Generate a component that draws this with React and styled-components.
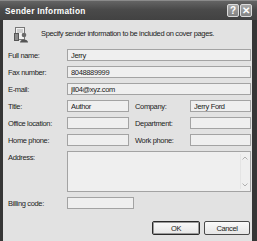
import React from 'react'
import styled, { createGlobalStyle } from 'styled-components'

const Global = createGlobalStyle`
body {
  margin: 0;
  background: #3a3a3a;
}
* { box-sizing: border-box; }
`
const Window = styled.div`
width: 257px;
height: 241px;
background: #363636;
display: flex;
flex-direction: column;
overflow: hidden;
font-family: "Liberation Sans", Arial, sans-serif;
font-size: 7.5px;
letter-spacing: -0.35px;
color: #222;
`
const TitleBar = styled.div`
height: 20px;
flex: none;
display: flex;
align-items: center;
padding: 0 5px 0 5px;
background: linear-gradient(#646464, #4a4a4a 45%, #424242);
border-top: 1px solid #8a8a8a;
`
const Caption = styled.div`
flex: 1;
color: #fff;
font-weight: bold;
font-size: 8.3px;
letter-spacing: 0.25px;
`
const CapButton = styled.div`
width: 12px;
height: 13px;
margin-left: 1px;
border: 1px solid #dcdcdc;
border-radius: 2px;
background: linear-gradient(#a8a8a8, #828282);
color: #fff;
font-weight: bold;
font-size: 10px;
letter-spacing: 0;
line-height: 11px;
text-align: center;
`
const Body = styled.div`
flex: 1;
margin: 0 5px 0 3px;
background: #e2e2e2;
display: flex;
flex-direction: column;
`
const Header = styled.div`
display: flex;
align-items: flex-start;
padding: 7px 0 0 11px;
height: 23px;
`
const Intro = styled.div`
margin-left: 12px;
margin-top: 2px;
`
const Form = styled.div`
margin-top: 6px;
padding-left: 5px;
display: grid;
grid-template-columns: 59px 62px 61px 61px;
row-gap: 5px;
`
const Label = styled.div`
display: flex;
align-items: ${p => (p.top ? 'flex-start' : 'center')};
padding-top: ${p => (p.top ? '2px' : '0')};
padding-left: ${p => (p.second ? '6px' : '0')};
white-space: nowrap;
`
const Field = styled.input`
height: 12px;
width: ${p => (p.w ? `${p.w}px` : 'auto')};
grid-column: ${p => (p.wide ? '2 / 5' : 'auto')};
min-width: 0;
margin: 0;
padding: 0 3px;
border: 1px solid #a3a3a3;
background: #efefef;
font: inherit;
letter-spacing: inherit;
color: #222;
outline: none;
`
const AddressBox = styled.div`
grid-column: 2 / 5;
height: 41px;
border: 1px solid #a3a3a3;
background: #efefef;
display: flex;
justify-content: flex-end;
`
const ScrollBar = styled.div`
width: 9px;
margin: 2px 1px 2px 0;
display: flex;
flex-direction: column;
justify-content: space-between;
align-items: center;
border-left: 1px solid #e4e4e4;
`
const Arrow = styled.svg`
display: block;
margin: 2px 0;
`
const Footer = styled.div`
margin-top: 12px;
padding-right: 2px;
display: flex;
justify-content: flex-end;
gap: 4px;
`
const Button = styled.div`
width: ${p => p.w}px;
height: 14px;
border: 1px solid ${p => (p.primary ? '#2a2a2a' : '#4a4a4a')};
box-shadow: ${p => (p.primary ? 'inset 0 0 0 1px #9a9a9a' : 'none')};
border-radius: 2px;
background: linear-gradient(#fafafa, #e6e6e6);
display: flex;
align-items: center;
justify-content: center;
`

const FaxIcon = () => (
  <svg width="15" height="16" viewBox="0 0 15 16">
    <rect x="1.5" y="0.5" width="9" height="12" fill="#f2f2f2" stroke="#777" />
    <line x1="3" y1="3" x2="9" y2="3" stroke="#aaa" />
    <line x1="3" y1="5" x2="9" y2="5" stroke="#aaa" />
    <rect x="0.5" y="6.5" width="4" height="7" fill="#8a8a8a" stroke="#555" />
    <circle cx="10" cy="8" r="2.3" fill="#6a6a6a" />
    <path d="M6 15.5 C6 11.5 14 11.5 14 15.5 Z" fill="#555" />
  </svg>
)

const Chevron = ({ down }) => (
  <Arrow width="6" height="4" viewBox="0 0 6 4">
    <path d={down ? 'M0.5 0.5 L3 3 L5.5 0.5' : 'M0.5 3.5 L3 1 L5.5 3.5'} fill="none" stroke="#b0b0b0" />
  </Arrow>
)

export default function App() {
  return (
    <Window>
      <Global />
      <TitleBar>
        <Caption>Sender Information</Caption>
        <CapButton>?</CapButton>
        <CapButton>✕</CapButton>
      </TitleBar>
      <Body>
        <Header>
          <FaxIcon />
          <Intro>Specify sender information to be included on cover pages.</Intro>
        </Header>
        <Form>
          <Label>Full name:</Label>
          <Field wide readOnly value="Jerry" />
          <Label>Fax number:</Label>
          <Field wide readOnly value="8048889999" />
          <Label>E-mail:</Label>
          <Field wide readOnly value="jll04@xyz.com" />
          <Label>Title:</Label>
          <Field readOnly value="Author" />
          <Label second>Company:</Label>
          <Field readOnly value="Jerry Ford" />
          <Label>Office location:</Label>
          <Field readOnly value="" />
          <Label second>Department:</Label>
          <Field readOnly value="" />
          <Label>Home phone:</Label>
          <Field readOnly value="" />
          <Label second>Work phone:</Label>
          <Field readOnly value="" />
          <Label top>Address:</Label>
          <AddressBox>
            <ScrollBar>
              <Chevron />
              <Chevron down />
            </ScrollBar>
          </AddressBox>
          <Label>Billing code:</Label>
          <Field readOnly value="" w={67} />
        </Form>
        <Footer>
          <Button primary w={48}>OK</Button>
          <Button w={46}>Cancel</Button>
        </Footer>
      </Body>
    </Window>
  )
}
